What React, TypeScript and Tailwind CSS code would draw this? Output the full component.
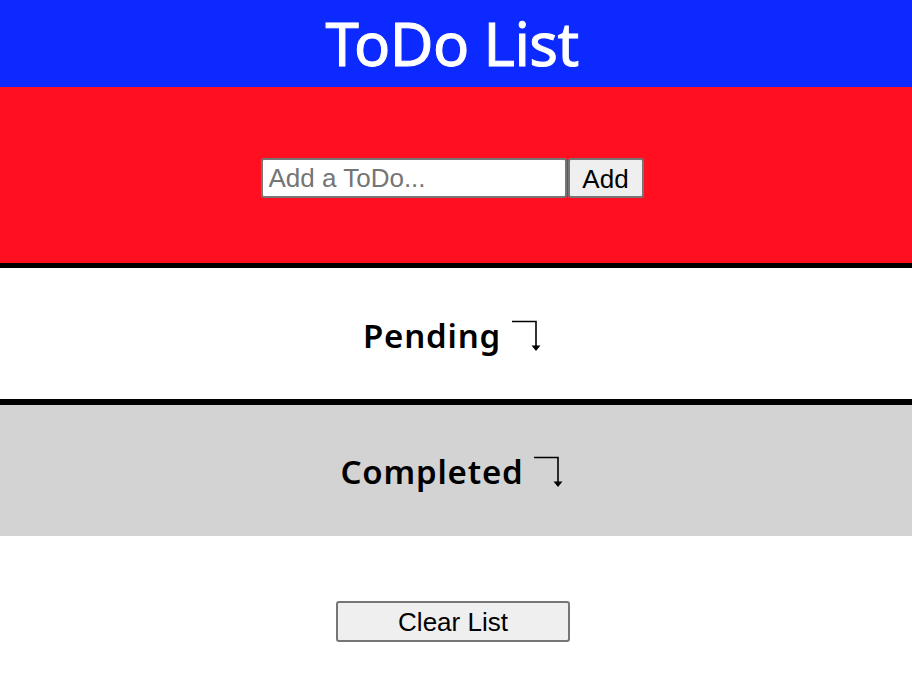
import React from "react";

function CornerArrow() {
  return (
    <svg width="30" height="34" viewBox="0 0 30 34" className="ml-[10px]" fill="none">
      <path d="M1 2.5 H25 V30" stroke="#000" strokeWidth="1.6" />
      <path d="M20.5 26.5 L25 32 L29.5 26.5 Z" fill="#000" />
    </svg>
  );
}

export default function App() {
  return (
    <div className="w-[912px] min-h-[688px] bg-white" style={{ fontFamily: "'Noto Sans', sans-serif" }}>
      <div className="h-[87px] bg-[#0c2aff] flex items-center justify-center pr-[8px]">
        <h1 className="text-white text-[60px] font-normal leading-none tracking-[-0.6px] -mt-[2px]" style={{ WebkitTextStroke: "1px white" }}>ToDo List</h1>
      </div>
      <div className="h-[176px] bg-[#ff0f1f] flex items-center justify-center pt-[6px] pr-[8px]">
        <div className="flex" style={{ fontFamily: "'Liberation Sans', Arial, sans-serif" }}>
          <input
            placeholder="Add a ToDo..."
            className="w-[306px] h-[40px] bg-white border-2 border-[#767676] rounded-[3px] px-[6px] text-[26px] text-black placeholder:text-[#757575] outline-none"
          />
          <button className="w-[76px] h-[40px] ml-[1px] bg-[#efefef] border-2 border-[#767676] rounded-[3px] text-[26px] text-black">
            Add
          </button>
        </div>
      </div>
      <div className="border-t-[5px] border-black h-[136px] flex items-center justify-center pr-[8px]">
        <div className="flex items-center pt-[4px]">
          <span className="text-[33px] font-semibold text-black tracking-[0.8px]">Pending</span>
          <CornerArrow />
        </div>
      </div>
      <div className="border-t-[6px] border-black bg-[#d3d3d3] h-[137px] flex items-center justify-center pr-[8px]">
        <div className="flex items-center pt-[2px]">
          <span className="text-[33px] font-semibold text-black tracking-[0.8px]">Completed</span>
          <CornerArrow />
        </div>
      </div>
      <div className="flex justify-center pt-[65px] pr-[6px]">
        <button
          className="w-[234px] h-[41px] bg-[#efefef] border-2 border-[#767676] rounded-[3px] text-[26px] text-black"
          style={{ fontFamily: "'Liberation Sans', Arial, sans-serif" }}
        >
          Clear List
        </button>
      </div>
    </div>
  );
}
